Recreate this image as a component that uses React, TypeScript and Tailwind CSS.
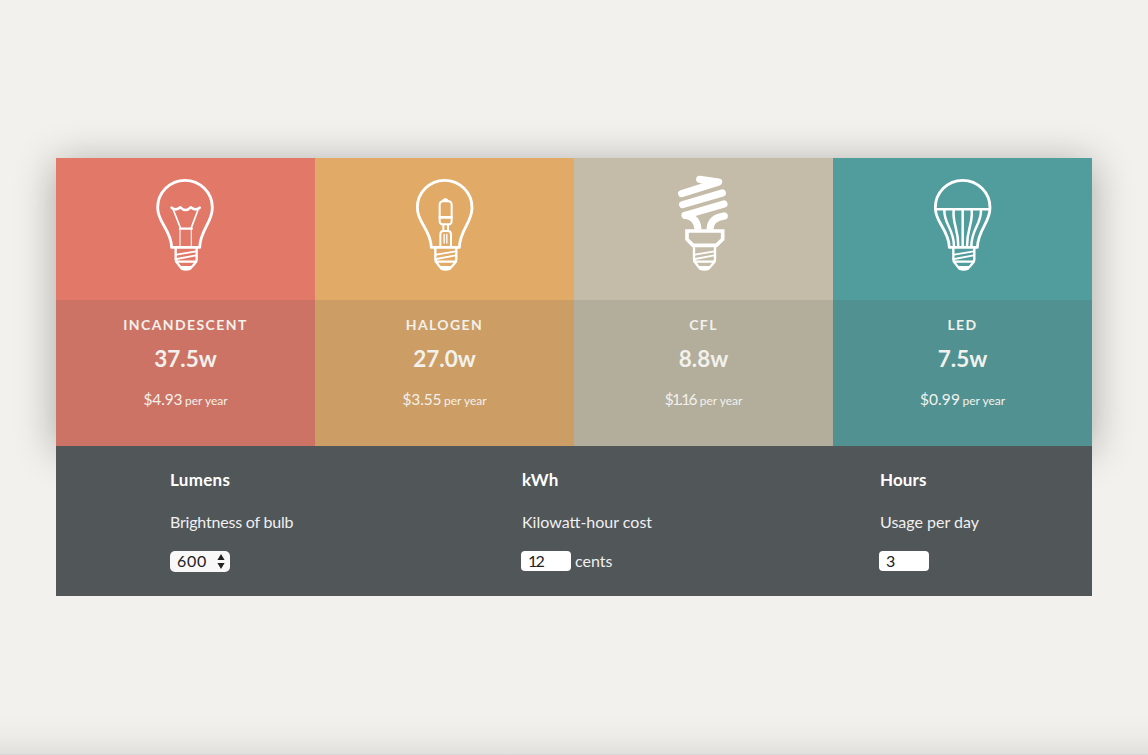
import type { ReactNode } from 'react';

const white = { stroke: '#fff', fill: 'none', strokeLinejoin: 'round' as const, strokeLinecap: 'round' as const };

function ScrewBase({ shift }: { shift: number }) {
  return (
    <g {...white} transform={`translate(${shift} 0)`}>
      <path d="M107 249V284C110 296 120 303 125 311Q138 317 151 311C157 303 168 296 170 284V249" strokeWidth="7" />
      <path d="M110 269L168 259M110 282L168 271" strokeWidth="5.5" />
      <path d="M108 290H169" strokeWidth="6.5" />
      <path d="M118 303H158L149 313Q138 317 128 313Z" fill="#fff" stroke="none" />
    </g>
  );
}

function Glass() {
  return (
    <path
      {...white}
      d="M95 247C93 193 53 174 53 128A82 82 0 0 1 217 128C217 174 181 193 179 247Z"
      strokeWidth="8.5"
    />
  );
}

function Icon({ children, baseShift = 0 }: { children: ReactNode; baseShift?: number }) {
  return (
    <svg className="block h-[115px] w-[90px]" viewBox="0 0 270 345">
      {children}
      <ScrewBase shift={baseShift} />
    </svg>
  );
}

function Incandescent() {
  return (
    <Icon>
      <Glass />
      <g {...white}>
        <path d="M95 128Q108 139 121 127Q137 143 152 127Q166 139 179 128" strokeWidth="8" />
        <path d="M99 132L121 188M175 132L154 188" strokeWidth="5" />
        <path d="M120 191H155" strokeWidth="7" />
        <path d="M120 194V244M154 194V244" strokeWidth="4" opacity=".8" />
      </g>
    </Icon>
  );
}

function Halogen() {
  return (
    <Icon baseShift={-1}>
      <g transform="translate(-1 0)"><Glass /></g>
      <g {...white} strokeWidth="6">
        <path d="M130 107Q136 101 142 107" strokeWidth="8" />
        <path d="M119 120Q119 109 129 109H145Q155 109 155 120V167Q155 178 145 178H129Q119 178 119 167Z" />
        <path d="M120 157H154" strokeWidth="8.5" />
        <path d="M130 180V194M144 180V194" />
        <path d="M121 245V208Q121 198 131 198H143Q153 198 153 208V245" />
        <path d="M132.500 208V234M140.500 208V234" strokeWidth="4" />
      </g>
    </Icon>
  );
}

function Cfl() {
  return (
    <Icon baseShift={-5}>
      <g {...white}>
        <path d="M119 43L176 51L65 86M187 84L68 119M192 117L75 151" strokeWidth="21.500" />
        <path d="M76 151Q113 157 114 194M193 153Q151 158 150 194" strokeWidth="21" strokeLinecap="butt" />
        <path d="M76 151H77M193 153H192" strokeWidth="21" />
        <path d="M81 198H188V223L169 241H99L81 223Z" strokeWidth="11" strokeLinejoin="miter" />
      </g>
    </Icon>
  );
}

function Led() {
  return (
    <Icon baseShift={-1}>
      <g transform="translate(-1 0)"><Glass /></g>
      <g {...white} strokeWidth="7.5">
        <path d="M54 133H214" />
        <path d="M134 134V245" />
        <path d="M79 135C78 180 108 190 108 245M189 135C190 180 160 190 160 245" />
        <path d="M107 135C103 178 121 188 121 245M161 135C165 178 147 188 147 245" />
      </g>
    </Icon>
  );
}

const bulbs = [
  { name: 'Incandescent', watts: '37.5w', cost: '$4.93', icon: <Incandescent />, bg: 'bg-[#e27868]', pad: 'pl-[84px]', price: 'tracking-[-0.1px]' },
  { name: 'Halogen', watts: '27.0w', cost: '$3.55', icon: <Halogen />, bg: 'bg-[#e1aa67]', pad: 'pl-[85px]', price: 'tracking-[-0.1px]' },
  { name: 'CFL', watts: '8.8w', cost: '$1.16', icon: <Cfl />, bg: 'bg-[#c4bca8]', pad: 'pl-[86px]', price: 'mr-[1.5px] tracking-[-1.7px]' },
  { name: 'LED', watts: '7.5w', cost: '$0.99', icon: <Led />, bg: 'bg-[#519c9d]', pad: 'pl-[85px]', price: 'tracking-[0.1px]' },
];

export default function App() {
  return (
    <main className="flex h-[755px] w-[1148px] flex-col bg-[#f2f1ed] px-14 pt-[158px] font-['Lato',sans-serif]">
      <section className="grid h-72 shrink-0 grid-cols-4 shadow-[0_5px_38px_rgba(0,0,0,0.31)]">
        {bulbs.map((b) => (
          <article key={b.name} className={b.bg}>
            <div className={`h-[142px] pt-[7px] ${b.pad}`}>{b.icon}</div>
            <div className="flex h-[146px] flex-col items-center bg-[rgba(85,85,85,0.15)] pt-[15px] text-[#f2f1ec]">
              <h2 className="text-[14px] leading-5 font-bold tracking-[1.4px] uppercase">{b.name}</h2>
              <p className="mt-2 text-[22.5px] leading-8 font-bold">{b.watts}</p>
              <p className="mt-3 text-[15.5px] leading-6">
                <span className={b.price}>{b.cost}</span>{' '}
                <span className="-ml-[1.5px] text-[12px]">per year</span>
              </p>
            </div>
          </article>
        ))}
      </section>
      <section className="relative flex h-[150px] shrink-0 bg-[#515659] pt-[22px] pl-[114px] text-base text-[#f0f0f0]">
        <div className="w-[351px]">
          <h3 className="text-[17px] leading-6 font-bold tracking-[0.3px] text-white">Lumens</h3>
          <p className="mt-[18px] leading-6 tracking-[-0.2px]">Brightness of bulb</p>
          <div className="mt-[17px] flex h-[21px] w-[60px] items-center justify-between rounded-[5px] bg-[#f8f8f8] pr-[5px] pl-[7px] text-[#222]">
            <span className="-mt-0.5 tracking-[0.7px]">600</span>
            <svg className="h-[15px] w-2" viewBox="0 0 8 15" fill="#222"><path d="M4 0L7.6 6H.4ZM4 15L.4 9H7.6Z" /></svg>
          </div>
        </div>
        <div className="w-[358px]">
          <h3 className="pl-px text-[17px] leading-6 font-bold tracking-[0.2px] text-white">kWh</h3>
          <p className="mt-[18px] pl-px leading-6">Kilowatt-hour cost</p>
          <div className="mt-[17px] flex h-5 items-center gap-1">
            <span className="flex h-5 w-[50px] items-center rounded bg-white pb-px pl-[7px] tracking-[-1.8px] text-[#222]">12</span>
            <span className="-mt-px">cents</span>
          </div>
        </div>
        <div>
          <h3 className="pl-px text-[17px] leading-6 font-bold tracking-[0.1px] text-white">Hours</h3>
          <p className="mt-[18px] pl-px leading-6">Usage per day</p>
          <span className="mt-[17px] flex h-5 w-[50px] items-center rounded bg-white pb-px pl-[7px] text-[#222]">3</span>
        </div>
      </section>
      <div className="-mx-14 mt-auto h-10 shrink-0 border-b border-[#d9d7d5] bg-linear-to-b from-transparent via-black/2 to-black/7" />
    </main>
  );
}
